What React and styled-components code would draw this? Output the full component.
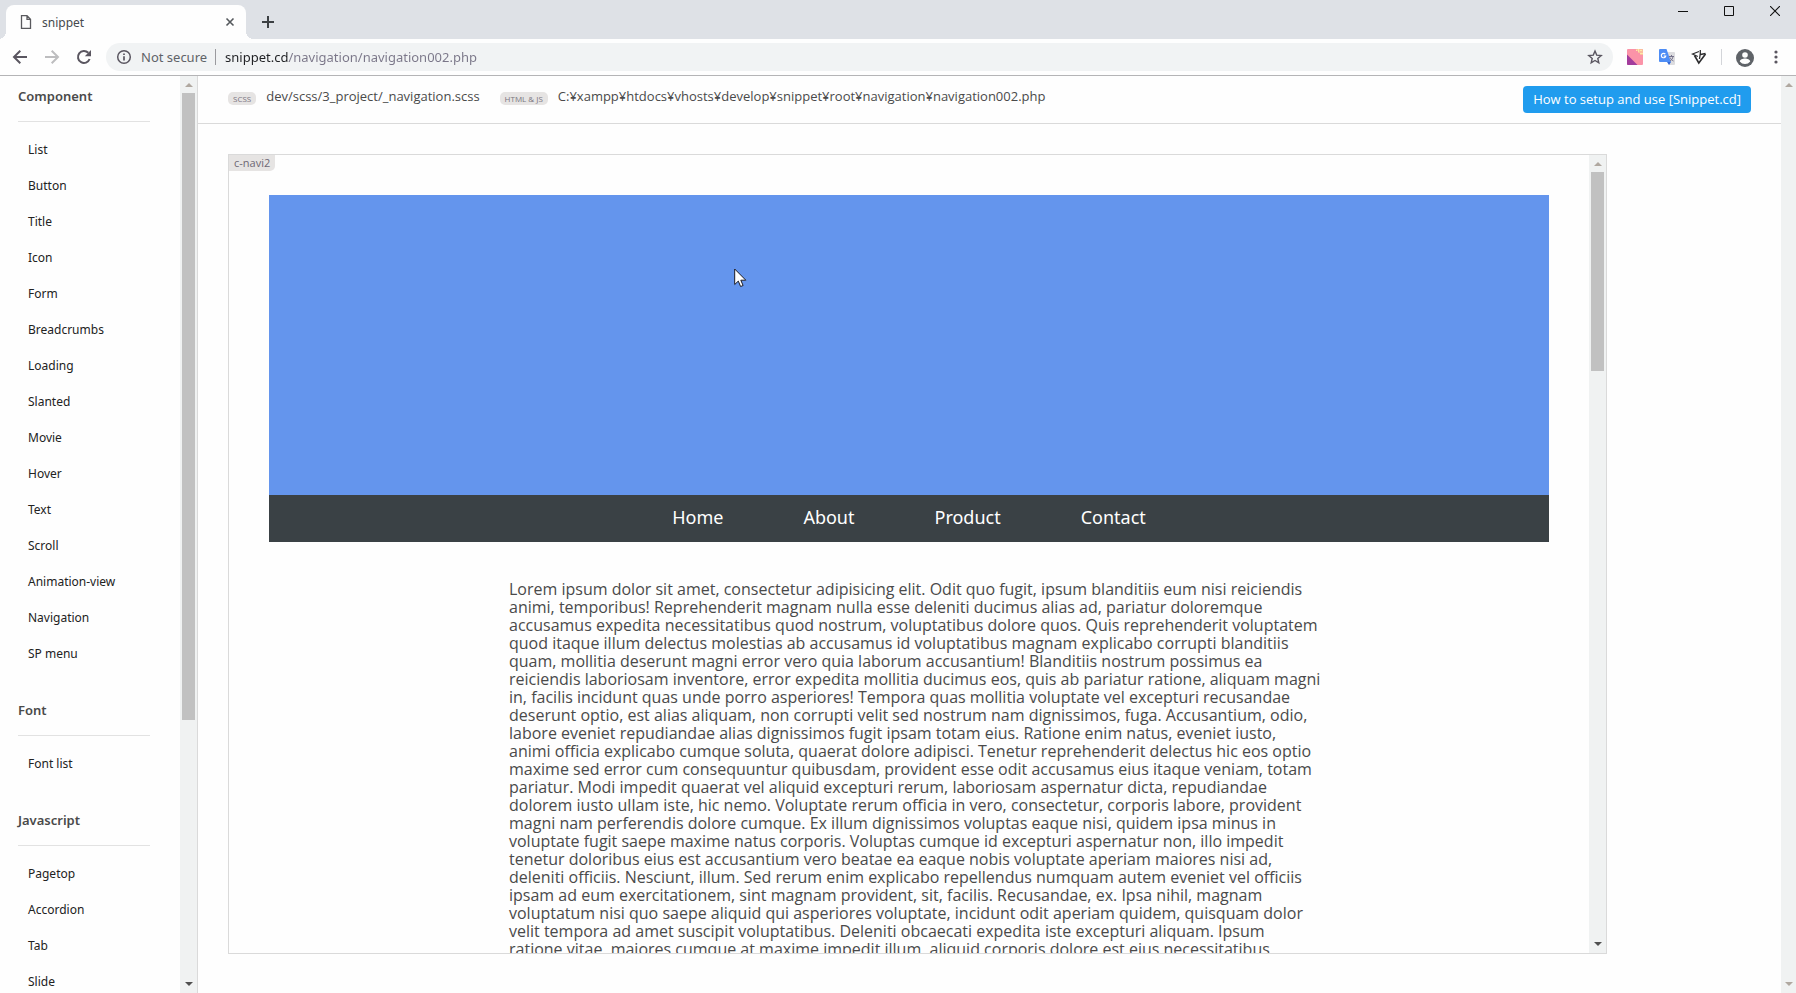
import React from "react";
import styled, { createGlobalStyle } from "styled-components";

const GlobalStyle = createGlobalStyle`
  * { box-sizing: border-box; }
  body {
    margin: 0;
    background: #fefefe;
    color: #4a4a4a;
    font-family: "Noto Sans", "Open Sans", sans-serif;
    font-size: 12px;
    overflow: hidden;
  }
  button { font: inherit; color: inherit; padding: 0; border: 0; background: none; }
  a { color: inherit; text-decoration: none; }
  ul { list-style: none; margin: 0; padding: 0; }
  svg { display: block; }
`;

const Browser = styled.div`
  display: flex;
  flex-direction: column;
  height: 100vh;
`;

/* ---------- browser chrome ---------- */

const TabStrip = styled.div`
  display: flex;
  align-items: flex-end;
  height: 39px;
  padding-left: 6px;
  background: #dee1e6;
`;

const Tab = styled.div`
  position: relative;
  display: flex;
  align-items: center;
  width: 240px;
  height: 34px;
  padding: 0 8px 0 14px;
  border-radius: 8px 8px 0 0;
  background: #fefefe;
  color: #45494d;

  &::before,
  &::after {
    content: "";
    position: absolute;
    bottom: 0;
    width: 8px;
    height: 8px;
  }
  &::before {
    left: -8px;
    background: radial-gradient(circle at 0 0, transparent 8px, #fefefe 8px);
  }
  &::after {
    right: -8px;
    background: radial-gradient(circle at 100% 0, transparent 8px, #fefefe 8px);
  }
`;

const TabTitle = styled.span`
  flex: 1;
  margin-left: 10px;
`;

const NewTab = styled.button`
  display: grid;
  place-items: center;
  width: 28px;
  height: 34px;
  margin-left: 8px;
`;

const WindowControls = styled.div`
  display: flex;
  align-self: flex-start;
  margin: 0 -2px 0 auto;
`;

const WindowButton = styled.button`
  display: grid;
  place-items: center;
  width: 46px;
  height: 22px;
`;

const Toolbar = styled.div`
  display: flex;
  align-items: center;
  height: 37px;
  padding: 0 12px;
  border-bottom: 1px solid #b4b4b6;
  background: #fefefe;
`;

const NavButtons = styled.div`
  display: flex;
  gap: 16px;
  margin-right: 14px;
`;

const ToolButton = styled.button`
  display: grid;
  place-items: center;
  width: 16px;
  height: 16px;
`;

const Omnibox = styled.div`
  display: flex;
  flex: 1;
  align-items: center;
  height: 28px;
  padding: 0 10px;
  border-radius: 14px;
  background: #f1f3f4;
  font-size: 13px;
`;

const Security = styled.button`
  display: flex;
  align-items: center;
  gap: 9px;
  padding-right: 8px;
  border-right: 1px solid #9a9a9e;
  color: #5f6368;
  line-height: 16px;
`;

const Address = styled.input`
  flex: 1;
  min-width: 0;
  margin-left: 9px;
  padding: 0;
  border: 0;
  outline: 0;
  font: inherit;
  color: transparent;
  background: linear-gradient(90deg, #202124 64px, #7a7688 64px);
  background-clip: text;
  -webkit-background-clip: text;
`;

const Extensions = styled.div`
  display: flex;
  align-items: center;
  gap: 16px;
  margin-left: 14px;
`;

const Separator = styled.span`
  width: 1px;
  height: 16px;
  margin: 0 -2px;
  background: #d3d5d9;
`;

/* ---------- scroll bars ---------- */

const Track = styled.div`
  display: flex;
  flex-direction: column;
  flex: none;
  width: ${(p) => p.$width}px;
  padding: 7px 2px;
  background: #f0f2f2;
`;

const Arrow = styled.span`
  align-self: center;
  border: 4px solid transparent;
  border-top-width: ${(p) => (p.$down ? 4 : 0)}px;
  border-bottom-width: ${(p) => (p.$down ? 0 : 4)}px;
  border-${(p) => (p.$down ? "top" : "bottom")}-color: ${(p) => (p.$active ? "#505050" : "#b0a8a0")};
`;

const ThumbArea = styled.div`
  flex: 1;
  margin: 6px 0;
`;

const Thumb = styled.div`
  height: ${(p) => p.$size}%;
  background: #c1c1c1;
`;

function ScrollBar({ size, canScrollDown, width = 17 }) {
  return (
    <Track $width={width} aria-hidden="true">
      <Arrow />
      <ThumbArea>{size > 0 && <Thumb $size={size} />}</ThumbArea>
      <Arrow $down $active={canScrollDown} />
    </Track>
  );
}

/* ---------- page ---------- */

const Page = styled.div`
  display: flex;
  flex: 1;
  min-height: 0;
`;

const Sidebar = styled.aside`
  display: flex;
  flex: none;
  width: 198px;
  border-right: 1px solid #dadada;
`;

const SidebarContent = styled.nav`
  flex: 1;
  padding: 8px 30px 0 18px;
  overflow: hidden;
`;

const Section = styled.section`
  margin-bottom: 26px;
`;

const SectionTitle = styled.h2`
  margin: 0 0 10px;
  padding-bottom: 13px;
  border-bottom: 1px solid #e2e2e2;
  font-size: 13px;
  font-weight: 600;
  line-height: 24px;
`;

const SectionLink = styled.a`
  display: block;
  padding-left: 10px;
  color: #222;
  font-size: 12px;
  line-height: 36px;
`;

const Main = styled.main`
  display: flex;
  flex: 1;
  flex-direction: column;
  min-width: 0;
`;

const PathBar = styled.header`
  display: flex;
  align-items: center;
  height: 48px;
  padding: 0 30px;
  border-bottom: 1px solid #dadada;
`;

const PathEntry = styled.div`
  display: flex;
  align-items: center;
  gap: 10px;
  margin: 0 20px 7px 0;
  font-family: "Open Sans", "Noto Sans", sans-serif;
  font-size: 13px;
  line-height: 18px;
  white-space: nowrap;
`;

const Badge = styled.span`
  margin-top: 5px;
  padding: 0 5px;
  border-radius: 5px;
  background: #e6e4e3;
  color: #7a7480;
  font-size: 8px;
  line-height: 13px;
`;

const SetupButton = styled.button`
  height: 27px;
  margin-left: auto;
  margin-bottom: 1px;
  padding: 0 10px;
  border-radius: 4px;
  background: #209cee;
  color: #fff;
  font-family: "Open Sans", "Noto Sans", sans-serif;
  font-size: 13px;
  white-space: nowrap;
`;

const Preview = styled.section`
  display: flex;
  flex: 1;
  min-height: 0;
  margin: 30px 174px 39px 30px;
  border: 1px solid #dadada;
`;

const PreviewContent = styled.div`
  position: relative;
  flex: 1;
  padding: 40px 40px 0;
  overflow: hidden;
`;

const PreviewLabel = styled.span`
  position: absolute;
  top: 0;
  left: 0;
  padding: 0 5px;
  border-radius: 0 0 5px 0;
  background: #e6e4e3;
  color: #6e6874;
  font-family: "Open Sans", "Noto Sans", sans-serif;
  font-size: 11px;
  line-height: 16px;
`;

const Hero = styled.div`
  position: relative;
  height: 300px;
  background: #6495ed;
`;

const Pointer = styled.svg`
  position: absolute;
  top: 73px;
  left: 465px;
`;

const SiteNav = styled.nav`
  display: flex;
  justify-content: center;
  gap: 80px;
  height: 47px;
  background: #3a4145;
  color: #fff;
  font-size: 18px;
  line-height: 45px;
`;

const Article = styled.p`
  width: 800px;
  max-width: 100%;
  margin: 38px auto 0;
  font-family: "Open Sans", "Noto Sans", sans-serif;
  font-size: 16px;
  line-height: 18px;
  white-space: pre;
`;

const sections = [
  {
    title: "Component",
    links: [
      "List", "Button", "Title", "Icon", "Form", "Breadcrumbs", "Loading", "Slanted",
      "Movie", "Hover", "Text", "Scroll", "Animation-view", "Navigation", "SP menu",
    ],
  },
  { title: "Font", links: ["Font list"] },
  { title: "Javascript", links: ["Pagetop", "Accordion", "Tab", "Slide"] },
];

const articleLines = [
  "Lorem ipsum dolor sit amet, consectetur adipisicing elit. Odit quo fugit, ipsum blanditiis eum nisi reiciendis",
  "animi, temporibus! Reprehenderit magnam nulla esse deleniti ducimus alias ad, pariatur doloremque",
  "accusamus expedita necessitatibus quod nostrum, voluptatibus dolore quos. Quis reprehenderit voluptatem",
  "quod itaque illum delectus molestias ab accusamus id voluptatibus magnam explicabo corrupti blanditiis",
  "quam, mollitia deserunt magni error vero quia laborum accusantium! Blanditiis nostrum possimus ea",
  "reiciendis laboriosam inventore, error expedita mollitia ducimus eos, quis ab pariatur ratione, aliquam magni",
  "in, facilis incidunt quas unde porro asperiores! Tempora quas mollitia voluptate vel excepturi recusandae",
  "deserunt optio, est alias aliquam, non corrupti velit sed nostrum nam dignissimos, fuga. Accusantium, odio,",
  "labore eveniet repudiandae alias dignissimos fugit ipsam totam eius. Ratione enim natus, eveniet iusto,",
  "animi officia explicabo cumque soluta, quaerat dolore adipisci. Tenetur reprehenderit delectus hic eos optio",
  "maxime sed error cum consequuntur quibusdam, provident esse odit accusamus eius itaque veniam, totam",
  "pariatur. Modi impedit quaerat vel aliquid excepturi rerum, laboriosam aspernatur dicta, repudiandae",
  "dolorem iusto ullam iste, hic nemo. Voluptate rerum officia in vero, consectetur, corporis labore, provident",
  "magni nam perferendis dolore cumque. Ex illum dignissimos voluptas eaque nisi, quidem ipsa minus in",
  "voluptate fugit saepe maxime natus corporis. Voluptas cumque id excepturi aspernatur non, illo impedit",
  "tenetur doloribus eius est accusantium vero beatae ea eaque nobis voluptate aperiam maiores nisi ad,",
  "deleniti officiis. Nesciunt, illum. Sed rerum enim explicabo repellendus numquam autem eveniet vel officiis",
  "ipsam ad eum exercitationem, sint magnam provident, sit, facilis. Recusandae, ex. Ipsa nihil, magnam",
  "voluptatum nisi quo saepe aliquid qui asperiores voluptate, incidunt odit aperiam quidem, quisquam dolor",
  "velit tempora ad amet suscipit voluptatibus. Deleniti obcaecati expedita iste excepturi aliquam. Ipsum",
  "ratione vitae, maiores cumque at maxime impedit illum, aliquid corporis dolore est eius necessitatibus",
];

function Stroke({ d, size = 16, width = 2, color = "#5a5660" }) {
  return (
    <svg width={size} height={size} viewBox={`0 0 ${size} ${size}`} fill="none" stroke={color} strokeWidth={width}>
      <path d={d} />
    </svg>
  );
}

function BrowserTabs() {
  return (
    <TabStrip>
      <Tab>
        <svg width="12" height="16" viewBox="0 0 12 16" fill="none" stroke="#5a5a5e" strokeWidth="1.3">
          <path d="M1.500 1.700h5.500l3.500 3.600v9H1.500zM7 1.700v3.600h3.500" />
        </svg>
        <TabTitle>snippet</TabTitle>
        <ToolButton aria-label="Close tab">
          <Stroke d="M4.500 4.500l7 7M11.500 4.500l-7 7" width={1.6} color="#55595d" />
        </ToolButton>
      </Tab>
      <NewTab aria-label="New tab">
        <Stroke d="M8 2v12M2 8h12" color="#3c4043" />
      </NewTab>
      <WindowControls>
        <WindowButton aria-label="Minimize">
          <Stroke d="M0 5.500h10" size={10} width={1} color="#111" />
        </WindowButton>
        <WindowButton aria-label="Maximize">
          <Stroke d="M.5 .5h9v9h-9z" size={10} width={1} color="#111" />
        </WindowButton>
        <WindowButton aria-label="Close window">
          <Stroke d="M0 0l10 10M10 0L0 10" size={10} width={1.1} color="#111" />
        </WindowButton>
      </WindowControls>
    </TabStrip>
  );
}

function BrowserToolbar() {
  return (
    <Toolbar>
      <NavButtons>
        <ToolButton aria-label="Back">
          <Stroke d="M15 8H2.500M8.300 1.800L2 8l6.300 6.200" />
        </ToolButton>
        <ToolButton aria-label="Forward">
          <Stroke d="M1 8h12.500M7.700 1.800L14 8l-6.300 6.200" color="#bdbdbf" />
        </ToolButton>
        <ToolButton aria-label="Reload">
          <svg width="16" height="16" viewBox="0 0 16 16">
            <path d="M13.600 10A6 6 0 1 1 12.300 3.800" fill="none" stroke="#5a5660" strokeWidth="2" />
            <path d="M15 1v6.200H8.800z" fill="#5a5660" />
          </svg>
        </ToolButton>
      </NavButtons>
      <Omnibox>
        <Security>
          <svg width="16" height="16" viewBox="0 0 16 16" fill="none" stroke="#5a5660">
            <circle cx="8" cy="8" r="6.300" strokeWidth="1.500" />
            <path d="M8 7.200v4.200M8 4.400v1.700" strokeWidth="1.700" />
          </svg>
          Not secure
        </Security>
        <Address aria-label="Address" defaultValue="snippet.cd/navigation/navigation002.php" />
        <ToolButton aria-label="Bookmark this page">
          <svg width="16" height="16" viewBox="0 0 16 16" fill="none" stroke="#5a5660" strokeWidth="1.400">
            <path d="M8 2l1.700 4.100 4.500.4-3.400 2.900 1 4.400L8 11.500l-3.800 2.300 1-4.400-3.400-2.900 4.500-.4z" />
          </svg>
        </ToolButton>
      </Omnibox>
      <Extensions>
        <ToolButton aria-label="Color extension">
          <svg width="16" height="16" viewBox="0 0 16 16">
            <rect width="16" height="16" rx="1" fill="#fb93a8" />
            <path d="M0 5.500L10.500 16H1a1 1 0 0 1-1-1z" fill="#a23c9c" />
            <path d="M7 0h2v2h2v2h2v2h3V1a1 1 0 0 0-1-1z" fill="#fbbf9c" />
            <path d="M9 1h1v1H9zM11 0h1v3h-1zM13 1h2v1h-2zM13 4h3v1h-3z" fill="#fde9a8" />
          </svg>
        </ToolButton>
        <ToolButton aria-label="Translate">
          <svg width="16" height="16" viewBox="0 0 16 16">
            <path d="M7 3h8a1 1 0 0 1 1 1v11a1 1 0 0 1-1 1h-5z" fill="#dcdcdf" />
            <path d="M0 1a1 1 0 0 1 1-1h6.500L12 13H1a1 1 0 0 1-1-1z" fill="#4e8df5" />
            <path d="M8 13h4l-2 3z" fill="#3367d6" />
            <path d="M6.300 5.200A2.200 2.200 0 1 0 6.700 7H4.700" fill="none" stroke="#fff" strokeWidth="1.200" />
            <path d="M10 7.500h5M12.500 6v1.500M14 7.500c-.3 2-1.500 3.700-3 4.500M11 8.500c.6 1.600 1.800 2.800 3.500 3.500" fill="none" stroke="#75718a" />
          </svg>
        </ToolButton>
        <ToolButton aria-label="Extension">
          <svg width="16" height="16" viewBox="0 0 16 16" fill="none" stroke="#2c2c2e">
            <path d="M8 2.500L1.500 5l5.300 2.500" strokeWidth="1.200" />
            <path d="M3.500 6.500L7.800 14 14.500 5" strokeWidth="1.600" />
            <path d="M9.300 1v3.500L8.500 10M9.500 5.500l5-1" strokeWidth="1.300" />
          </svg>
        </ToolButton>
        <Separator />
        <ToolButton aria-label="Profile">
          <svg width="18" height="18" viewBox="0 0 18 18">
            <circle cx="9" cy="9" r="9" fill="#5f6368" />
            <circle cx="9" cy="6" r="2.800" fill="#fefefe" />
            <path d="M3.800 12.500c0-2 3-3 5.200-3s5.200 1 5.200 3a6.500 6.500 0 0 1-10.400 0z" fill="#fefefe" />
          </svg>
        </ToolButton>
        <ToolButton aria-label="Menu">
          <svg width="16" height="16" viewBox="0 0 16 16" fill="#5a5660">
            <circle cx="8" cy="3" r="1.600" />
            <circle cx="8" cy="8" r="1.600" />
            <circle cx="8" cy="13" r="1.600" />
          </svg>
        </ToolButton>
      </Extensions>
    </Toolbar>
  );
}

export default function App() {
  return (
    <Browser>
      <GlobalStyle />
      <BrowserTabs />
      <BrowserToolbar />
      <Page>
        <Sidebar>
          <SidebarContent>
            {sections.map(({ title, links }) => (
              <Section key={title}>
                <SectionTitle>{title}</SectionTitle>
                <ul>
                  {links.map((link) => (
                    <li key={link}>
                      <SectionLink href="#">{link}</SectionLink>
                    </li>
                  ))}
                </ul>
              </Section>
            ))}
          </SidebarContent>
          <ScrollBar size={71} canScrollDown />
        </Sidebar>
        <Main>
          <PathBar>
            <PathEntry>
              <Badge>SCSS</Badge>
              dev/scss/3_project/_navigation.scss
            </PathEntry>
            <PathEntry>
              <Badge>HTML &amp; JS</Badge>
              C:¥xampp¥htdocs¥vhosts¥develop¥snippet¥root¥navigation¥navigation002.php
            </PathEntry>
            <SetupButton>How to setup and use [Snippet.cd]</SetupButton>
          </PathBar>
          <Preview>
            <PreviewContent>
              <PreviewLabel>c-navi2</PreviewLabel>
              <Hero>
                <Pointer width="13" height="20" viewBox="0 0 13 20">
                  <path d="M.7 1v15.500l3.600-3.400 2.300 5.400 2.500-1-2.300-5.300h5z" fill="#fff" stroke="#1c1c24" />
                </Pointer>
              </Hero>
              <SiteNav>
                <a href="#">Home</a>
                <a href="#">About</a>
                <a href="#">Product</a>
                <a href="#">Contact</a>
              </SiteNav>
              <Article>{articleLines.join("\n")}</Article>
            </PreviewContent>
            <ScrollBar size={26} canScrollDown />
          </Preview>
        </Main>
        <ScrollBar width={15} />
      </Page>
    </Browser>
  );
}
